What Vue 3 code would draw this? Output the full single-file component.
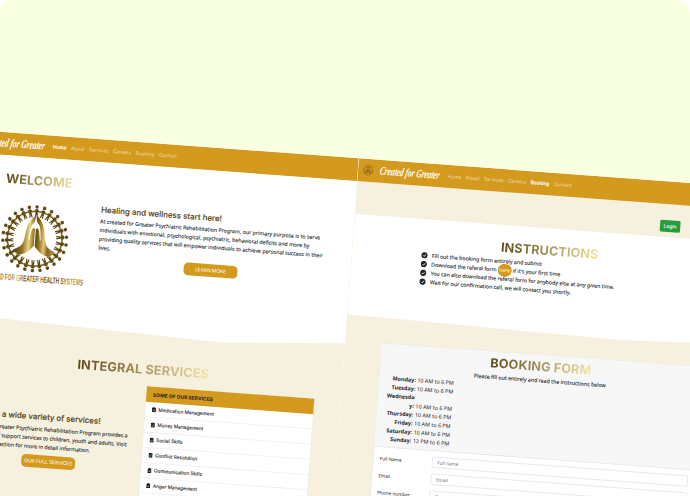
<script setup>
const links = ['Home', 'About', 'Services', 'Careers', 'Booking', 'Contact']
const people = Array.from({ length: 26 }, (_, i) => (i * 360) / 26)
const services = [
  'Medication Management',
  'Money Management',
  'Social Skills',
  'Conflict Resolution',
  'Communication Skills',
  'Anger Management',
  'Coping Skills',
]
const hours = [
  ['Monday:', '10 AM to 6 PM'],
  ['Tuesday:', '10 AM to 6 PM'],
  ['Wednesda', ''],
  ['y:', '10 AM to 6 PM'],
  ['Thursday:', '10 AM to 6 PM'],
  ['Friday:', '10 AM to 6 PM'],
  ['Saturday:', '10 AM to 6 PM'],
  ['Sunday:', '12 PM to 6 PM'],
]
const fields = [
  ['Full Name', 'Full name'],
  ['Email', 'Email'],
  ['Phone number', 'Phone number'],
]
</script>

<template>
  <div class="frame">
    <svg class="defs" width="0" height="0" aria-hidden="true">
      <defs>
        <linearGradient id="gold" gradientUnits="userSpaceOnUse" x1="-121" y1="0" x2="121" y2="0">
          <stop offset="0" stop-color="#7a5a16" />
          <stop offset=".14" stop-color="#6f5310" />
          <stop offset=".27" stop-color="#f1e08c" />
          <stop offset=".38" stop-color="#c3a344" />
          <stop offset=".5" stop-color="#5a4410" />
          <stop offset=".62" stop-color="#b08a35" />
          <stop offset=".72" stop-color="#8a5f1c" />
          <stop offset=".86" stop-color="#b98f3c" />
          <stop offset=".94" stop-color="#ead97f" />
          <stop offset="1" stop-color="#8c6a22" />
        </linearGradient>
        <linearGradient id="palm" gradientUnits="userSpaceOnUse" x1="-74" y1="0" x2="74" y2="0">
          <stop offset="0" stop-color="#5b4010" />
          <stop offset=".2" stop-color="#8d6b20" />
          <stop offset=".36" stop-color="#e8d886" />
          <stop offset=".46" stop-color="#9d7e30" />
          <stop offset=".54" stop-color="#66500f" />
          <stop offset=".64" stop-color="#a98531" />
          <stop offset=".73" stop-color="#e0c877" />
          <stop offset=".83" stop-color="#8a6120" />
          <stop offset="1" stop-color="#c59a4a" />
        </linearGradient>
        <linearGradient id="letters" gradientUnits="userSpaceOnUse" x1="-185" y1="0" x2="185" y2="0">
          <stop offset="0" stop-color="#7a5a16" />
          <stop offset=".3" stop-color="#b88a3a" />
          <stop offset=".36" stop-color="#d9bb6c" />
          <stop offset=".44" stop-color="#6d5014" />
          <stop offset=".56" stop-color="#a37d2c" />
          <stop offset=".68" stop-color="#6d4c12" />
          <stop offset=".82" stop-color="#8e6c26" />
          <stop offset=".9" stop-color="#c9ac62" />
          <stop offset="1" stop-color="#a27b3a" />
        </linearGradient>
        <g id="person">
          <circle cx="0" cy="-116" r="6.500" />
          <path d="M-4-108H4L9-101 13-102 14-98 7-95 4-98 6-78H2L0-90-2-78H-6L-4-98-7-95-14-98-13-102-9-101Z" />
        </g>
        <g id="hands">
          <path d="M-1-84C-14-78-26-60-32-36C-36-12-36 6-43 20C-50 33-66 38-77 47L-58 61C-40 64-16 48-1.500 26V-36L-8-39C-14-34-17-16-19 6L-22 4C-20-20-19-42-12-52C-6-58-3-62-2-72Z" />
          <path d="M1-84C14-78 26-60 32-36C36-12 36 6 43 20C50 33 66 38 77 47L58 61C40 64 16 48 1.500 26V-36L8-39C14-34 17-16 19 6L22 4C20-20 19-42 12-52C6-58 3-62 2-72Z" />
        </g>
      </defs>
    </svg>

    <div class="stage">
      <div class="window">
        <nav class="nav">
          <svg class="mark" viewBox="-122 -122 244 244">
            <g fill="#6b4d12">
              <use v-for="a in people" :key="a" href="#person" :transform="`rotate(${a})`" />
              <use href="#hands" />
            </g>
          </svg>
          <svg class="brand" viewBox="0 0 226 50">
            <text x="8" y="36" textLength="218" lengthAdjust="spacingAndGlyphs">Created for Greater</text>
          </svg>
          <a v-for="l in links" :key="l" :class="{ active: l === 'Home' }">{{ l }}</a>
        </nav>
        <section class="hero">
          <h1 class="title welcome">WELCOME</h1>
          <div class="hero-row">
            <svg class="emblem" viewBox="-190 -123 380 290">
              <g fill="url(#gold)">
                <use v-for="a in people" :key="a" href="#person" :transform="`rotate(${a})`" />
              </g>
              <use href="#hands" fill="url(#palm)" />
              <text x="-185" y="157" textLength="372" lengthAdjust="spacingAndGlyphs" fill="url(#letters)">CREATED FOR GREATER HEALTH SYSTEMS</text>
            </svg>
            <div class="copy">
              <h2 class="sub">Healing and wellness start here!</h2>
              <p>
                At created for Greater Psychiatric Rehabilitation Program, our primary purpose is to serve<br />
                individuals with emotional, psychological, psychiatric, behavioral deficits and more by<br />
                providing quality services that will empower individuals to achieve personal success in their<br />
                lives.
              </p>
              <button class="pill">LEARN MORE</button>
            </div>
          </div>
        </section>
        <section class="services">
          <h1 class="title">INTEGRAL SERVICES</h1>
          <div class="service-row">
            <div class="offer">
              <h2 class="sub">We offer a wide variety of services!</h2>
              <p>
                Created for Greater Psychiatric Rehabilitation Program provides a<br />
                wide range of support services to children, youth and adults. Visit<br />
                our services section for more in detail information.
              </p>
              <button class="pill">OUR FULL SERVICES</button>
            </div>
            <div class="list">
              <div class="list-head">SOME OF OUR SERVICES</div>
              <div v-for="s in services" :key="s" class="list-item">
                <svg viewBox="0 0 14 18">
                  <path fill="#212529" d="M2 2h2.500a2.500 2.500 0 0 1 5 0H12a2 2 0 0 1 2 2v12a2 2 0 0 1-2 2H2a2 2 0 0 1-2-2V4a2 2 0 0 1 2-2Z" />
                  <path d="M3.500 10.500 6 13l4.500-5" fill="none" stroke="#fff" stroke-width="1.800" />
                </svg>
                {{ s }}
              </div>
            </div>
          </div>
        </section>
      </div>

      <div class="window second">
        <nav class="nav">
          <svg class="mark" viewBox="-122 -122 244 244">
            <g fill="#7a5818">
              <use v-for="a in people" :key="a" href="#person" :transform="`rotate(${a})`" />
              <use href="#hands" />
            </g>
          </svg>
          <svg class="brand" viewBox="0 0 226 50">
            <text x="8" y="36" textLength="218" lengthAdjust="spacingAndGlyphs">Created for Greater</text>
          </svg>
          <a v-for="l in links" :key="l" :class="{ active: l === 'Booking' }">{{ l }}</a>
        </nav>
        <div class="login-bar"><button class="login">Login</button></div>
        <section class="instructions">
          <h1 class="title">INSTRUCTIONS</h1>
          <ul>
            <li><i class="tick"><svg viewBox="0 0 22 22"><path d="m6 11.500 3.500 3.500 7-7.500" /></svg></i>Fill out the booking form entirely and submit</li>
            <li>
              <i class="tick"><svg viewBox="0 0 22 22"><path d="m6 11.500 3.500 3.500 7-7.500" /></svg></i>
              <span>Download the referal form <span class="slot"><a class="here">here</a></span> if it's your first time</span>
            </li>
            <li><i class="tick"><svg viewBox="0 0 22 22"><path d="m6 11.500 3.500 3.500 7-7.500" /></svg></i>You can also download the referal form for anybody else at any given time.</li>
            <li><i class="tick"><svg viewBox="0 0 22 22"><path d="m6 11.500 3.500 3.500 7-7.500" /></svg></i>Wait for our confirmation call, we will contact you shortly.</li>
          </ul>
        </section>
        <div class="booking">
          <header>
            <h1 class="title">BOOKING FORM</h1>
            <p>Please fill out entirely and read the instructions below</p>
            <div v-for="[d, h] in hours" :key="d" class="hour"><b>{{ d }}</b><span>{{ h }}</span></div>
          </header>
          <div class="form">
            <label v-for="[l, p] in fields" :key="l" class="field">
              <span>{{ l }}</span><input :placeholder="p" />
            </label>
          </div>
        </div>
      </div>
    </div>
  </div>
</template>

<style>
body { margin: 0; background: #fff; }
</style>

<style scoped>
* { box-sizing: border-box; }
.frame {
  position: relative;
  width: 690px;
  height: 496px;
  overflow: hidden;
  border-radius: 13px 13px 0 0;
  background: #f9ffe1;
}
.defs { position: absolute; }
/* The page mockups sit side by side on one tilted board. */
.stage {
  position: absolute;
  left: -36.3px;
  top: 129.35px;
  display: flex;
  width: 2880px;
  transform-origin: 0 0;
  transform: rotate(4.25deg) scale(.275);
  font: 19.1px/32px "Noto Sans", sans-serif;
  color: #212529;
}
.window {
  width: 1440px;
  height: 1500px;
  flex: none;
  overflow: hidden;
  background: #f6f0df;
}
.second { box-shadow: -1px 0 0 1px rgba(255, 255, 255, .35); }
h1, h2, p, ul { margin: 0; padding: 0; }
p, li, .list-item { -webkit-text-stroke: .35px currentColor; }
button { border: 0; display: block; padding: 0; }
.nav {
  height: 82.5px;
  display: flex;
  align-items: center;
  gap: 16px;
  padding-left: 18px;
  background: #d49a1d;
  font: 17.7px/24px Inter, sans-serif;
  color: rgba(255, 255, 255, .65);
}
.nav a { margin-left: -3px; margin-right: 3px; }
.nav .active { color: #fff; -webkit-text-stroke: .6px #fff; }
.mark { width: 38px; height: 42px; opacity: .8; }
.brand { width: 226px; height: 50px; margin: 2px 13px 0 3px; overflow: visible; }
.brand text {
  font: italic 700 43px "Liberation Serif", serif;
  fill: #fff;
  transform: skewX(-8deg);
}
.title {
  font: 700 46px/60px Inter, sans-serif;
  letter-spacing: .4px;
  width: max-content;
  color: transparent;
  background: linear-gradient(90deg, #5c4716, #f5e5a5);
  background-clip: text;
  -webkit-background-clip: text;
}
.hero {
  height: 622.5px;
  padding-top: 54.5px;
  background: #fff;
  clip-path: polygon(0 0, 100% 0, 100% 592px, 999px 622.5px, 0 588px);
}
.welcome { margin-left: 166px; letter-spacing: .2px; }
.hero-row { display: flex; margin-top: 39px; }
.emblem { width: 380px; height: 290px; margin: 20px 43px 0 96px; flex: none; }
.emblem text { font: 700 32px "Liberation Sans", sans-serif; }
.copy { width: 826px; }
.sub {
  font: 500 28.8px/40px Inter, sans-serif;
  color: #5c4716;
  white-space: nowrap;
  -webkit-text-stroke: .5px #5c4716;
}
p { white-space: nowrap; }
.copy p { margin-top: 6px; }
.pill {
  width: 196px;
  height: 46px;
  margin: 14px auto 0;
  border-radius: 16px;
  background: #d49a1d;
  color: #fff;
  font: 17.5px/46px Inter, sans-serif;
  white-space: nowrap;
}
.services .title { margin: 87px 0 0 475px; letter-spacing: .6px; }
.service-row { display: flex; margin-top: 32px; padding-left: 90px; }
.offer { width: 610px; padding-top: 119px; margin-right: 33px; flex: none; }
.offer .sub { font-size: 28.6px; }
.offer p { margin-top: 9px; }
.list { width: 610px; background: #fff; box-shadow: 0 0 0 1px #e4dfd2; }
.list-head {
  height: 56px;
  padding-left: 24px;
  background: #d49a1d;
  font: 700 18px/60px Inter, sans-serif;
}
.list-item {
  height: 55.4px;
  display: flex;
  align-items: center;
  gap: 9px;
  padding-left: 24px;
  border-bottom: 2px solid #e6e6e6;
  font: 17.3px/24px Inter, sans-serif;
}
.list-item svg { width: 15px; height: 19px; }
.login-bar { height: 119px; padding: 58.5px 256px 0 0; display: flex; justify-content: flex-end; }
.login {
  width: 74px;
  height: 43px;
  border-radius: 5px;
  background: #259d3f;
  color: #fff;
  font: 18px/43px "Noto Sans", sans-serif;
  -webkit-text-stroke: .4px #fff;
}
.instructions {
  height: 387px;
  padding-top: 51.5px;
  background: #fff;
  clip-path: polygon(0 0, 100% 0, 100% 369px, 1009px 387px, 0 367px);
}
.instructions .title { margin: 0 auto; transform: translateX(-3px); }
ul { list-style: none; margin: 5px 0 0 253px; }
li { display: flex; align-items: center; gap: 16px; height: 32px; white-space: nowrap; }
.tick {
  width: 22px;
  height: 22px;
  border-radius: 50%;
  background: #212529;
  display: block;
}
.tick svg { display: block; }
.tick path { fill: none; stroke: #fff; stroke-width: 3; }
.slot { display: inline-block; width: 50px; height: 32px; vertical-align: top; }
.here {
  display: block;
  height: 46px;
  margin-top: -6px;
  border-radius: 22px;
  background: #d49a1d;
  color: #fbe9be;
  text-align: center;
  font: 18px/45px Inter, sans-serif;
}
.booking {
  width: 1176px;
  margin: 74.5px 0 0 132px;
  background: #fff;
  border: 2px solid #e3e2de;
  border-bottom: 0;
}
header { height: 376px; padding-top: 10px; background: #f7f7f7; border-bottom: 2px solid #dfdfdf; }
header .title { margin: 0 auto; transform: translateX(-4px); }
header p { margin-top: 7px; line-height: 31px; text-align: center; transform: translateX(-4px); }
.hour { display: flex; gap: 6px; height: 31.6px; line-height: 31.6px; font-size: 19.6px; }
.hour b { width: 132px; text-align: right; white-space: nowrap; }
.form { padding: 21px 27px 0 22px; }
.field { display: flex; height: 62px; font-size: 17px; line-height: 41px; }
.field span { width: 190.6px; }
.field input {
  flex: 1;
  height: 40px;
  padding: 0 17px;
  border: 2px solid #d3d8de;
  border-radius: 5px;
  background: #fff;
  font: 17px "Noto Sans", sans-serif;
}
.field input::placeholder { color: #6c757d; opacity: 1; }
</style>
